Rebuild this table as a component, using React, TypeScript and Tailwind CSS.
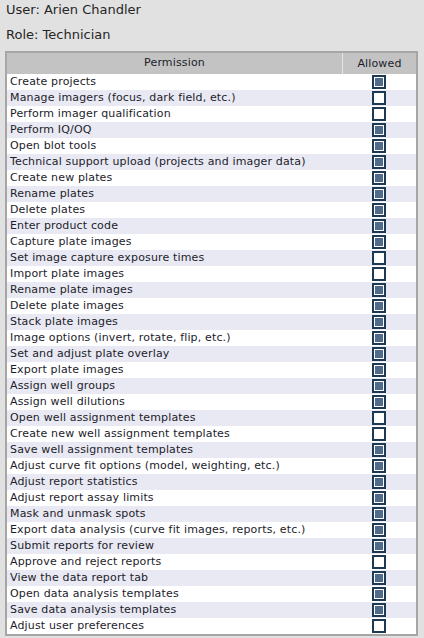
import { useState } from 'react';

const permissions: [string, boolean][] = [
  ['Create projects', true],
  ['Manage imagers (focus, dark field, etc.)', false],
  ['Perform imager qualification', false],
  ['Perform IQ/OQ', true],
  ['Open blot tools', true],
  ['Technical support upload (projects and imager data)', true],
  ['Create new plates', true],
  ['Rename plates', true],
  ['Delete plates', true],
  ['Enter product code', true],
  ['Capture plate images', true],
  ['Set image capture exposure times', false],
  ['Import plate images', false],
  ['Rename plate images', true],
  ['Delete plate images', true],
  ['Stack plate images', true],
  ['Image options (invert, rotate, flip, etc.)', true],
  ['Set and adjust plate overlay', true],
  ['Export plate images', true],
  ['Assign well groups', true],
  ['Assign well dilutions', true],
  ['Open well assignment templates', false],
  ['Create new well assignment templates', false],
  ['Save well assignment templates', true],
  ['Adjust curve fit options (model, weighting, etc.)', true],
  ['Adjust report statistics', true],
  ['Adjust report assay limits', true],
  ['Mask and unmask spots', true],
  ['Export data analysis (curve fit images, reports, etc.)', true],
  ['Submit reports for review', true],
  ['Approve and reject reports', false],
  ['View the data report tab', true],
  ['Open data analysis templates', true],
  ['Save data analysis templates', true],
  ['Adjust user preferences', false],
];

function Check({ checked, onClick }: { checked: boolean; onClick: () => void }) {
  return (
    <button
      onClick={onClick}
      className="w-[14px] h-[14px] border-2 border-[#1e3a52] bg-white p-px flex shrink-0"
    >
      {checked && <span className="w-full h-full bg-[#506b8b]" />}
    </button>
  );
}

export default function App() {
  const [allowed, setAllowed] = useState(permissions.map(p => p[1]));

  const toggle = (i: number) =>
    setAllowed(cur => cur.map((v, j) => (j === i ? !v : v)));

  return (
    <div className="w-[424px] h-[638px] bg-[#e1e1e1] text-[#1c1c2a] font-['DejaVu_Sans',sans-serif] overflow-hidden">
      <div className="pl-[6px] pt-[2px] text-[13px] leading-[16px] text-[#262626]">User: Arien Chandler</div>
      <div className="pl-[6px] pt-[9px] text-[13px] leading-[16px] text-[#262626]">Role: Technician</div>
      <div className="ml-[5px] mt-[8px] w-[413px] border-2 border-[#a6a6a6] bg-white">
        <div className="flex h-[21px] bg-[#c3c3c3] text-[11px] tracking-[0.15px] items-center">
          <div className="flex-1 text-center border-r border-[#e4e4e4] h-full leading-[20px]">Permission</div>
          <div className="w-[73px] text-center leading-[20px]">Allowed</div>
        </div>
        {permissions.map(([name], i) => (
          <div
            key={name}
            className={`flex h-[16px] items-center text-[11px] tracking-[0.15px] ${i % 2 === 1 ? 'bg-[#e9e9f3]' : 'bg-white'}`}
          >
            <div className="flex-1 pl-[3px] whitespace-nowrap leading-[16px]">{name}</div>
            <div className="w-[73px] flex justify-center pr-[1px]">
              <Check checked={allowed[i]} onClick={() => toggle(i)} />
            </div>
          </div>
        ))}
      </div>
    </div>
  );
}
